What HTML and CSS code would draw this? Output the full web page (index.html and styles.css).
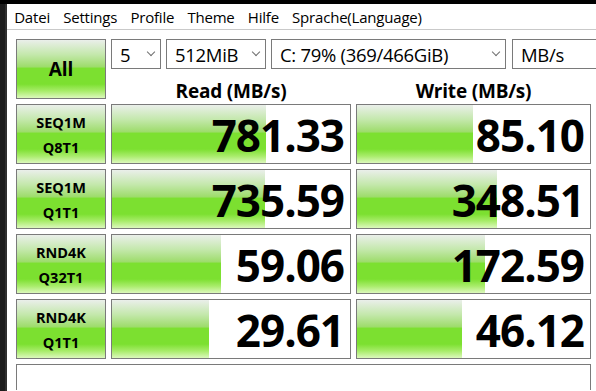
FILE: index.html
```html
<!DOCTYPE html>
<html lang="de">
<head>
  <meta charset="UTF-8">
  <title>CrystalDiskMark</title>
  <link rel="stylesheet" href="styles.css">
</head>
<body>
  <div class="topbar"></div>
  <div class="frame">
    <div class="edge"></div>
    <div class="app">
      <!-- Menüleiste -->
      <nav class="menu">
        <span>Datei</span>
        <span>Settings</span>
        <span>Profile</span>
        <span>Theme</span>
        <span>Hilfe</span>
        <span>Sprache(Language)</span>
      </nav>

      <div class="main">
        <div class="grid">
          <div class="btn all">All</div>
          <div class="controls">
            <div class="selects">
              <div class="select s-count"><span>5</span><i class="chev"></i></div>
              <div class="select s-size"><span>512MiB</span><i class="chev"></i></div>
              <div class="select s-drive"><span>C: 79% (369/466GiB)</span><i class="chev"></i></div>
              <div class="select s-unit"><span>MB/s</span><i class="chev"></i></div>
            </div>
            <div class="heads">
              <div class="head read">Read (MB/s)</div>
              <div class="head write">Write (MB/s)</div>
            </div>
          </div>

          <div class="btn label">SEQ1M<br>Q8T1</div>
          <div class="cell read"><div class="fill" style="width: 64.7%"></div><span>781.33</span></div>
          <div class="cell write"><div class="fill" style="width: 49.8%"></div><span>85.10</span></div>

          <div class="btn label">SEQ1M<br>Q1T1</div>
          <div class="cell read"><div class="fill" style="width: 64.3%"></div><span>735.59</span></div>
          <div class="cell write"><div class="fill" style="width: 60%"></div><span>348.51</span></div>

          <div class="btn label">RND4K<br>Q32T1</div>
          <div class="cell read"><div class="fill" style="width: 45.8%"></div><span>59.06</span></div>
          <div class="cell write"><div class="fill" style="width: 55%"></div><span>172.59</span></div>

          <div class="btn label">RND4K<br>Q1T1</div>
          <div class="cell read"><div class="fill" style="width: 40.8%"></div><span>29.61</span></div>
          <div class="cell write"><div class="fill" style="width: 45%"></div><span>46.12</span></div>

          <div class="comment"></div>
        </div>
      </div>
    </div>
  </div>
</body>
</html>
```

FILE: styles.css
```css
/* Grundlayout */
html, body {
  margin: 0;
  padding: 0;
  background: #ffffff;
  color: #000000;
  font-family: 'Open Sans', 'Noto Sans', sans-serif;
  box-sizing: border-box;
}
*, *::before, *::after {
  box-sizing: inherit;
}
body {
  height: 391px;
  overflow: hidden;
}
.topbar {
  height: 4px;
  background: #000000;
}
.frame {
  display: flex;
  height: 387px;
}
.edge {
  width: 7px;
  flex: none;
  background: #1c1c1c;
  border-right: 2px solid #2f2f2f;
}
.app {
  flex: 1;
  display: flex;
  flex-direction: column;
  min-width: 0;
}
/* Menü */
.menu {
  display: flex;
  height: 26px;
  align-items: center;
  font-size: 15px;
  border-bottom: 1px solid #c9c9c9;
}
.menu span {
  padding: 0 6.6px;
  letter-spacing: -0.2px;
}
.menu span:first-child {
  padding-left: 7.2px;
}
/* Hauptbereich */
.main {
  padding: 9px 0 0 9px;
}
.grid {
  display: grid;
  grid-template-columns: 90px 240px 235px;
  grid-template-rows: 60px 60px 60px 60px 60px 26px;
  gap: 5px;
  width: 580px;
}
.btn {
  border: 1px solid #7a7a7a;
  background: linear-gradient(to bottom, #eaefea 0%, #c4e8ac 25%, #9edc6c 46%, #7ce030 49%, #7ce030 76%, #a8ec6a 88%, #dcf8bc 100%);
  display: flex;
  align-items: center;
  justify-content: center;
  text-align: center;
  font-weight: 700;
}
.all {
  font-size: 19px;
}
.label {
  font-size: 14.5px;
  line-height: 25px;
  padding-top: 1px;
}
.controls {
  grid-column: 2 / 4;
  display: flex;
  flex-direction: column;
}
.selects {
  display: flex;
  gap: 5px;
  height: 30px;
}
.select {
  flex: none;
  border: 1px solid #7a7a7a;
  display: flex;
  align-items: center;
  justify-content: space-between;
  padding: 0 6px 0 8px;
  font-size: 18.5px;
  white-space: nowrap;
  letter-spacing: -0.3px;
}
.s-count { width: 50px; }
.s-size { width: 100px; }
.s-drive { width: 235px; }
.s-unit { width: 100px; margin-left: 1px; }
.chev {
  width: 6px;
  height: 6px;
  border-right: 1px solid #707070;
  border-bottom: 1px solid #707070;
  transform: rotate(45deg);
  margin-top: -5px;
}
.heads {
  display: flex;
  gap: 5px;
  flex: 1;
  align-items: flex-end;
  margin-bottom: -2px;
}
.head {
  font-size: 19px;
  line-height: 19px;
  font-weight: 700;
  text-align: center;
  letter-spacing: -0.2px;
}
.head.read { width: 240px; }
.head.write { width: 235px; }
/* Messwerte */
.cell {
  position: relative;
  border: 1px solid #7a7a7a;
  background: #ffffff;
  display: flex;
  align-items: center;
  justify-content: flex-end;
  padding-right: 6px;
  overflow: hidden;
}
.cell .fill {
  position: absolute;
  left: 0;
  top: 0;
  bottom: 0;
  background: linear-gradient(to bottom, #eaefea 0%, #c4e8ac 25%, #9edc6c 46%, #7ce030 49%, #7ce030 76%, #a8ec6a 88%, #dcf8bc 100%);
}
.cell span {
  position: relative;
  font-size: 44px;
  font-weight: 700;
  letter-spacing: -1px;
  line-height: 1;
  margin-top: 2px;
}
.comment {
  grid-column: 1 / 4;
  border: 1px solid #7a7a7a;
  border-bottom: none;
}
```
